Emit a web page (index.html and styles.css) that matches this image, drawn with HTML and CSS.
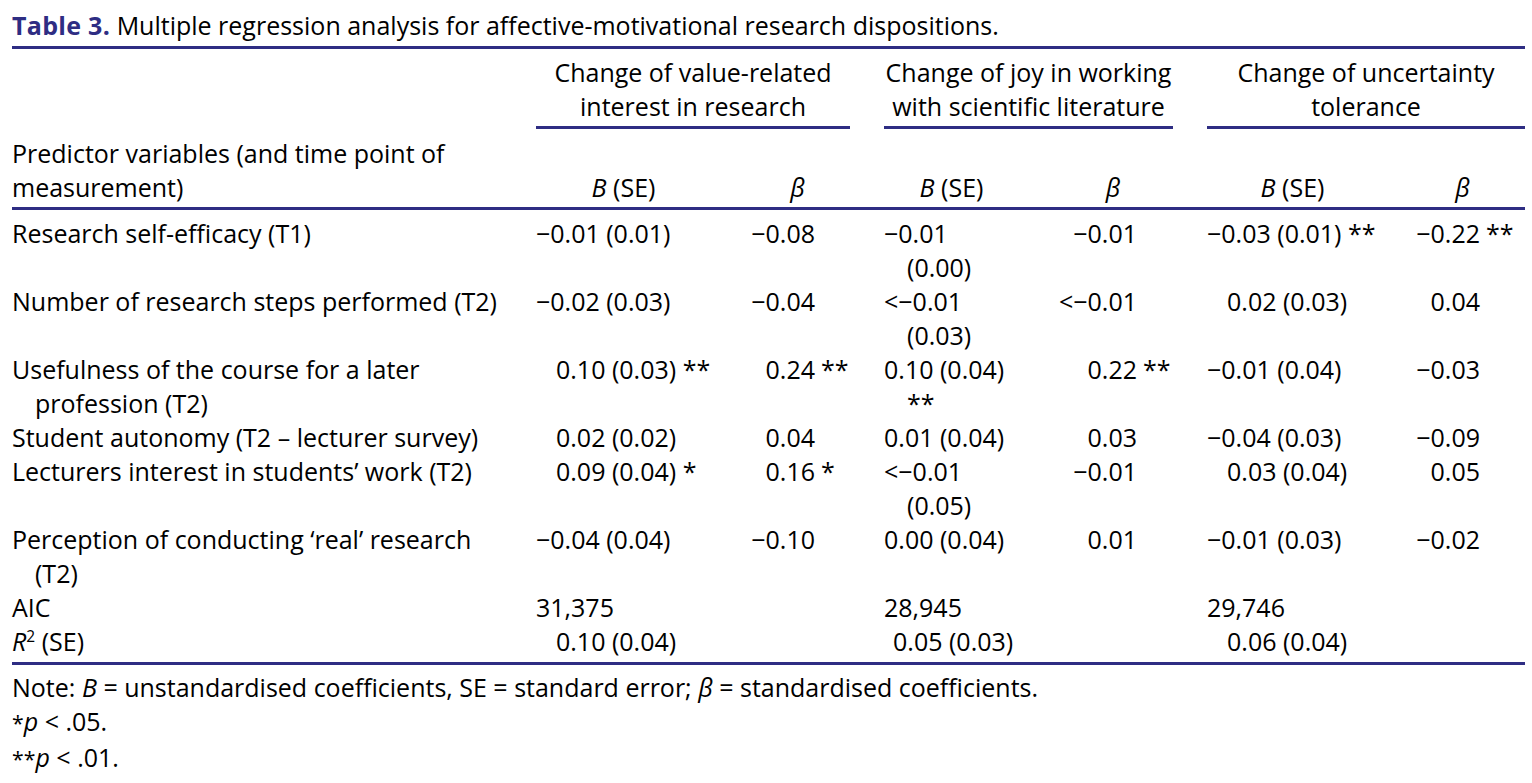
FILE: index.html
```html
<!DOCTYPE html>
<html lang="en">
<head>
<meta charset="utf-8">
<title>Table 3</title>
<link rel="stylesheet" href="styles.css">
</head>
<body>
<div class="page">
  <div class="caption"><span class="label">Table 3.</span> <span class="ctext">Multiple regression analysis for affective-motivational research dispositions.</span></div>
  <table class="reg">
    <colgroup>
      <col class="w1"><col class="w2"><col class="w3"><col class="w4"><col class="w5"><col class="w6"><col class="w7">
    </colgroup>
    <thead>
      <tr class="grp">
        <th></th>
        <th colspan="2" class="g gap"><div class="gl">Change of value-related<br>interest in research</div></th>
        <th colspan="2" class="g gap"><div class="gl">Change of joy in working<br>with scientific literature</div></th>
        <th colspan="2" class="g"><div class="gl">Change of uncertainty<br>tolerance</div></th>
      </tr>
      <tr class="sub">
        <th class="pv">Predictor variables (and time point of<br>measurement)</th>
        <th class="c"><i>B</i> (SE)</th>
        <th class="c"><i>β</i></th>
        <th class="c"><i>B</i> (SE)</th>
        <th class="c"><i>β</i></th>
        <th class="c"><i>B</i> (SE)</th>
        <th class="c b3"><i>β</i></th>
      </tr>
    </thead>
    <tbody>
      <tr class="first">
        <td class="pred">Research self-efficacy (T1)</td>
        <td class="bse">−0.01 (0.01)</td>
        <td class="beta b1">−0.08</td>
        <td class="bse2">−0.01<br><span class="wr">(0.00)</span></td>
        <td class="beta b2">−0.01</td>
        <td class="bse">−0.03 (0.01) **</td>
        <td class="beta b3v">−0.22<span class="st">**</span></td>
      </tr>
      <tr>
        <td class="pred">Number of research steps performed (T2)</td>
        <td class="bse">−0.02 (0.03)</td>
        <td class="beta b1">−0.04</td>
        <td class="bse2">&lt;−0.01<br><span class="wr">(0.03)</span></td>
        <td class="beta b2">&lt;−0.01</td>
        <td class="bse pos">0.02 (0.03)</td>
        <td class="beta b3v">0.04</td>
      </tr>
      <tr>
        <td class="pred">Usefulness of the course for a later<br><span class="wr">profession (T2)</span></td>
        <td class="bse pos">0.10 (0.03) **</td>
        <td class="beta b1">0.24<span class="st">**</span></td>
        <td class="bse2">0.10 (0.04)<br><span class="wr">**</span></td>
        <td class="beta b2">0.22<span class="st">**</span></td>
        <td class="bse">−0.01 (0.04)</td>
        <td class="beta b3v">−0.03</td>
      </tr>
      <tr>
        <td class="pred">Student autonomy (T2 – lecturer survey)</td>
        <td class="bse pos">0.02 (0.02)</td>
        <td class="beta b1">0.04</td>
        <td class="bse2">0.01 (0.04)</td>
        <td class="beta b2">0.03</td>
        <td class="bse">−0.04 (0.03)</td>
        <td class="beta b3v">−0.09</td>
      </tr>
      <tr>
        <td class="pred">Lecturers interest in students’ work (T2)</td>
        <td class="bse pos">0.09 (0.04) *</td>
        <td class="beta b1">0.16<span class="st">*</span></td>
        <td class="bse2">&lt;−0.01<br><span class="wr">(0.05)</span></td>
        <td class="beta b2">−0.01</td>
        <td class="bse pos">0.03 (0.04)</td>
        <td class="beta b3v">0.05</td>
      </tr>
      <tr>
        <td class="pred">Perception of conducting ‘real’ research<br><span class="wr">(T2)</span></td>
        <td class="bse">−0.04 (0.04)</td>
        <td class="beta b1">−0.10</td>
        <td class="bse2">0.00 (0.04)</td>
        <td class="beta b2">0.01</td>
        <td class="bse">−0.01 (0.03)</td>
        <td class="beta b3v">−0.02</td>
      </tr>
      <tr>
        <td class="pred">AIC</td>
        <td class="bse">31,375</td>
        <td></td>
        <td class="bse2">28,945</td>
        <td></td>
        <td class="bse">29,746</td>
        <td></td>
      </tr>
      <tr class="last">
        <td class="pred"><i>R</i><sup>2</sup> (SE)</td>
        <td class="bse pos">0.10 (0.04)</td>
        <td></td>
        <td class="bse2 r2">0.05 (0.03)</td>
        <td></td>
        <td class="bse pos">0.06 (0.04)</td>
        <td></td>
      </tr>
    </tbody>
  </table>
  <div class="notes">
    <p>Note: <i>B</i> = unstandardised coefficients, SE = standard error; <i>β</i> = standardised coefficients.</p>
    <p><span class="ast">*</span><i>p</i> &lt; .05.</p>
    <p><span class="ast">**</span><i>p</i> &lt; .01.</p>
  </div>
</div>
</body>
</html>
```
FILE: styles.css
```css
html, body {
  margin: 0;
  padding: 0;
  background: #ffffff;
  overflow: hidden;
}

.page {
  padding: 8px 0 0 12px;
  width: 1513px;
  font-family: "Open Sans", "Noto Sans", sans-serif;
  font-size: 25px;
  line-height: 34px;
  color: #000000;
}

.caption {
  border-bottom: 3px solid #2e2d83;
  padding-bottom: 4px;
  white-space: nowrap;
}

.caption .label {
  color: #2e2d83;
  font-weight: 700;
  letter-spacing: 0.3px;
}

.reg {
  border-collapse: collapse;
  table-layout: fixed;
  width: 1513px;
  border-bottom: 3px solid #2e2d83;
}

.w1 { width: 524px; }
.w2 { width: 175px; }
.w3 { width: 173px; }
.w4 { width: 135px; }
.w5 { width: 188px; }
.w6 { width: 171px; }
.w7 { width: 147px; }

.reg th, .reg td {
  padding: 0;
  font-weight: 400;
  vertical-align: top;
  white-space: nowrap;
  text-align: left;
}

.grp th {
  padding-top: 6px;
}

.grp th.gap {
  padding-right: 34px;
}

.gl {
  text-align: center;
  border-bottom: 3px solid #2e2d83;
  padding-bottom: 3px;
}

.sub th {
  padding-top: 7px;
  padding-bottom: 3px;
  border-bottom: 3px solid #2e2d83;
  vertical-align: bottom;
}

.sub th.c {
  text-align: center;
}

.sub th.b3 {
  padding-left: 22px;
}

.first td {
  padding-top: 6px;
}

.last td {
  padding-bottom: 4px;
}

.pred .wr,
.bse2 .wr {
  padding-left: 23px;
}

.bse {
  padding-left: 1px;
}

.bse.pos {
  padding-left: 20px;
}

.bse2.r2 {
  padding-left: 9px;
}

.reg td.beta {
  text-align: right;
}

.reg td.b1 { padding-right: 69px; }
.reg td.b2 { padding-right: 70px; }
.reg td.b3v { padding-right: 45px; }

.st {
  display: inline-block;
  width: 40px;
  margin-right: -40px;
  padding-left: 6px;
  box-sizing: border-box;
  text-align: left;
}

sup {
  font-size: 0.62em;
  line-height: 0;
  vertical-align: 0.55em;
}

.notes {
  padding-top: 5px;
}

.notes p {
  margin: 0;
  white-space: nowrap;
}

.ast {
  font-size: 0.85em;
}
```
